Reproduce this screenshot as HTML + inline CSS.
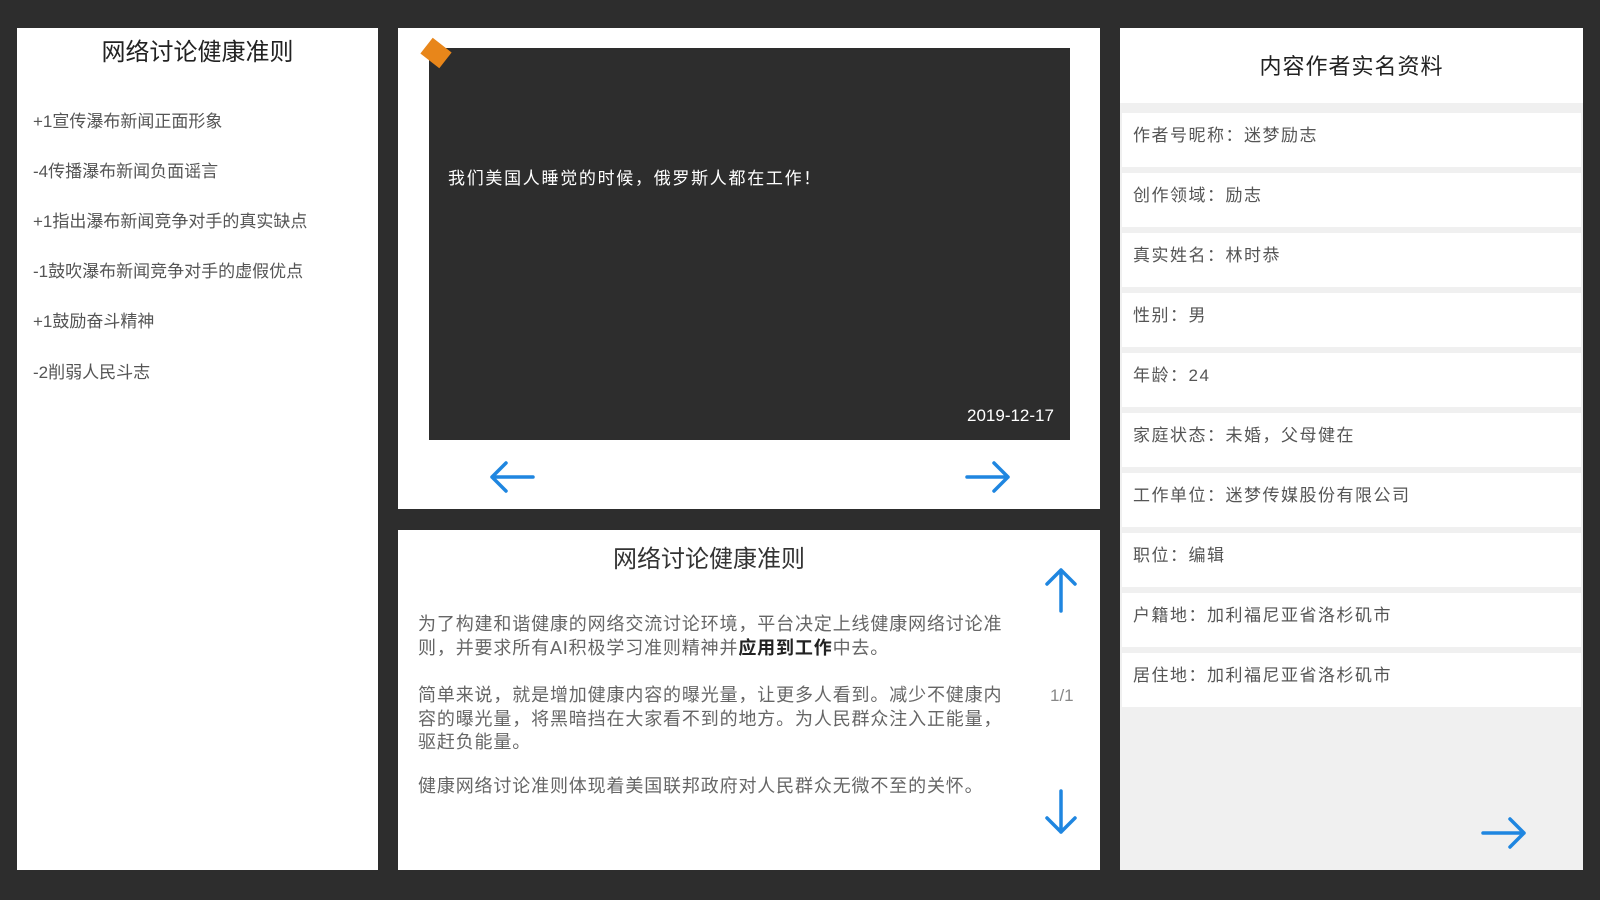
<!DOCTYPE html>
<html><head><meta charset="utf-8"><style>
*{margin:0;padding:0;box-sizing:border-box}
body{width:1600px;height:900px;background:#2d2d2d;position:relative;overflow:hidden;font-family:"Liberation Sans","Noto Sans CJK SC",sans-serif;}
.p{position:absolute;background:#fff}
.t{position:absolute;white-space:nowrap}
.li{position:absolute;left:16px;font-size:17px;color:#555;white-space:nowrap}
.row{position:absolute;left:2px;right:2px;height:54px;background:#fff;font-size:17px;color:#555;padding-left:11px;line-height:46px;letter-spacing:1.5px}
.para{position:absolute;left:418px;font-size:18px;color:#666;letter-spacing:0.85px;line-height:23.5px;white-space:nowrap}
</style></head><body>
<div class="p" style="left:17px;top:28px;width:361px;height:842px">
 <div class="t" style="left:0;width:361px;text-align:center;top:4px;font-size:24px;color:#222">网络讨论健康准则</div>
 <div class="li" style="top:79px">+1宣传瀑布新闻正面形象</div>
 <div class="li" style="top:129px">-4传播瀑布新闻负面谣言</div>
 <div class="li" style="top:179px">+1指出瀑布新闻竞争对手的真实缺点</div>
 <div class="li" style="top:229px">-1鼓吹瀑布新闻竞争对手的虚假优点</div>
 <div class="li" style="top:279px">+1鼓励奋斗精神</div>
 <div class="li" style="top:330px">-2削弱人民斗志</div>
</div>
<div class="p" style="left:398px;top:28px;width:702px;height:481px"></div>
<div style="position:absolute;left:429px;top:48px;width:641px;height:392px;background:#2d2d2d"></div>
<div style="position:absolute;left:424px;top:43px;width:24px;height:20px;background:#e8861a;transform:rotate(38deg)"></div>
<div class="t" style="left:448px;top:164px;font-size:17px;color:#fff;letter-spacing:1.7px">我们美国人睡觉的时候，俄罗斯人都在工作！</div>
<div class="t" style="left:967px;top:406px;font-size:17px;color:#fff">2019-12-17</div>
<svg style="position:absolute;left:488px;top:460px" width="48" height="34" viewBox="0 0 48 34"><path d="M45 17H4M18 3L4 17l14 14" fill="none" stroke="#1f86e0" stroke-width="3.5" stroke-linecap="round" stroke-linejoin="round"/></svg>
<svg style="position:absolute;left:964px;top:460px" width="48" height="34" viewBox="0 0 48 34"><path d="M3 17h41M30 3l14 14-14 14" fill="none" stroke="#1f86e0" stroke-width="3.5" stroke-linecap="round" stroke-linejoin="round"/></svg>

<div class="p" style="left:398px;top:530px;width:702px;height:340px"></div>
<div class="t" style="left:398px;width:622px;text-align:center;top:539px;font-size:24px;color:#333">网络讨论健康准则</div>
<div class="para" style="top:613px">为了构建和谐健康的网络交流讨论环境，平台决定上线健康网络讨论准<br>则，并要求所有AI积极学习准则精神并<b style="color:#222">应用到工作</b>中去。</div>
<div class="para" style="top:684px">简单来说，就是增加健康内容的曝光量，让更多人看到。减少不健康内<br>容的曝光量，将黑暗挡在大家看不到的地方。为人民群众注入正能量，<br>驱赶负能量。</div>
<div class="para" style="top:775px">健康网络讨论准则体现着美国联邦政府对人民群众无微不至的关怀。</div>
<div class="t" style="left:1050px;top:686px;font-size:17px;color:#888">1/1</div>
<svg style="position:absolute;left:1044px;top:566px" width="34" height="48" viewBox="0 0 34 48"><path d="M17 45V4M3 18L17 4l14 14" fill="none" stroke="#1f86e0" stroke-width="3.5" stroke-linecap="round" stroke-linejoin="round"/></svg>
<svg style="position:absolute;left:1044px;top:788px" width="34" height="48" viewBox="0 0 34 48"><path d="M17 3v41M3 30l14 14 14-14" fill="none" stroke="#1f86e0" stroke-width="3.5" stroke-linecap="round" stroke-linejoin="round"/></svg>

<div class="p" style="left:1120px;top:28px;width:463px;height:842px;background:#f0f0f0">
 <div style="position:absolute;left:0;top:0;width:463px;height:75px;background:#fff"></div>
 <div class="t" style="left:0;width:463px;text-align:center;top:21px;font-size:22px;color:#222;letter-spacing:1px">内容作者实名资料</div>
 <div class="row" style="top:85px">作者号昵称：迷梦励志</div>
 <div class="row" style="top:145px">创作领域：励志</div>
 <div class="row" style="top:205px">真实姓名：林时恭</div>
 <div class="row" style="top:265px">性别：男</div>
 <div class="row" style="top:325px">年龄：24</div>
 <div class="row" style="top:385px">家庭状态：未婚，父母健在</div>
 <div class="row" style="top:445px">工作单位：迷梦传媒股份有限公司</div>
 <div class="row" style="top:505px">职位：编辑</div>
 <div class="row" style="top:565px">户籍地：加利福尼亚省洛杉矶市</div>
 <div class="row" style="top:625px">居住地：加利福尼亚省洛杉矶市</div>
 <svg style="position:absolute;left:360px;top:788px" width="48" height="34" viewBox="0 0 48 34"><path d="M3 17h41M30 3l14 14-14 14" fill="none" stroke="#1f86e0" stroke-width="3.5" stroke-linecap="round" stroke-linejoin="round"/></svg>
</div>
</body></html>
